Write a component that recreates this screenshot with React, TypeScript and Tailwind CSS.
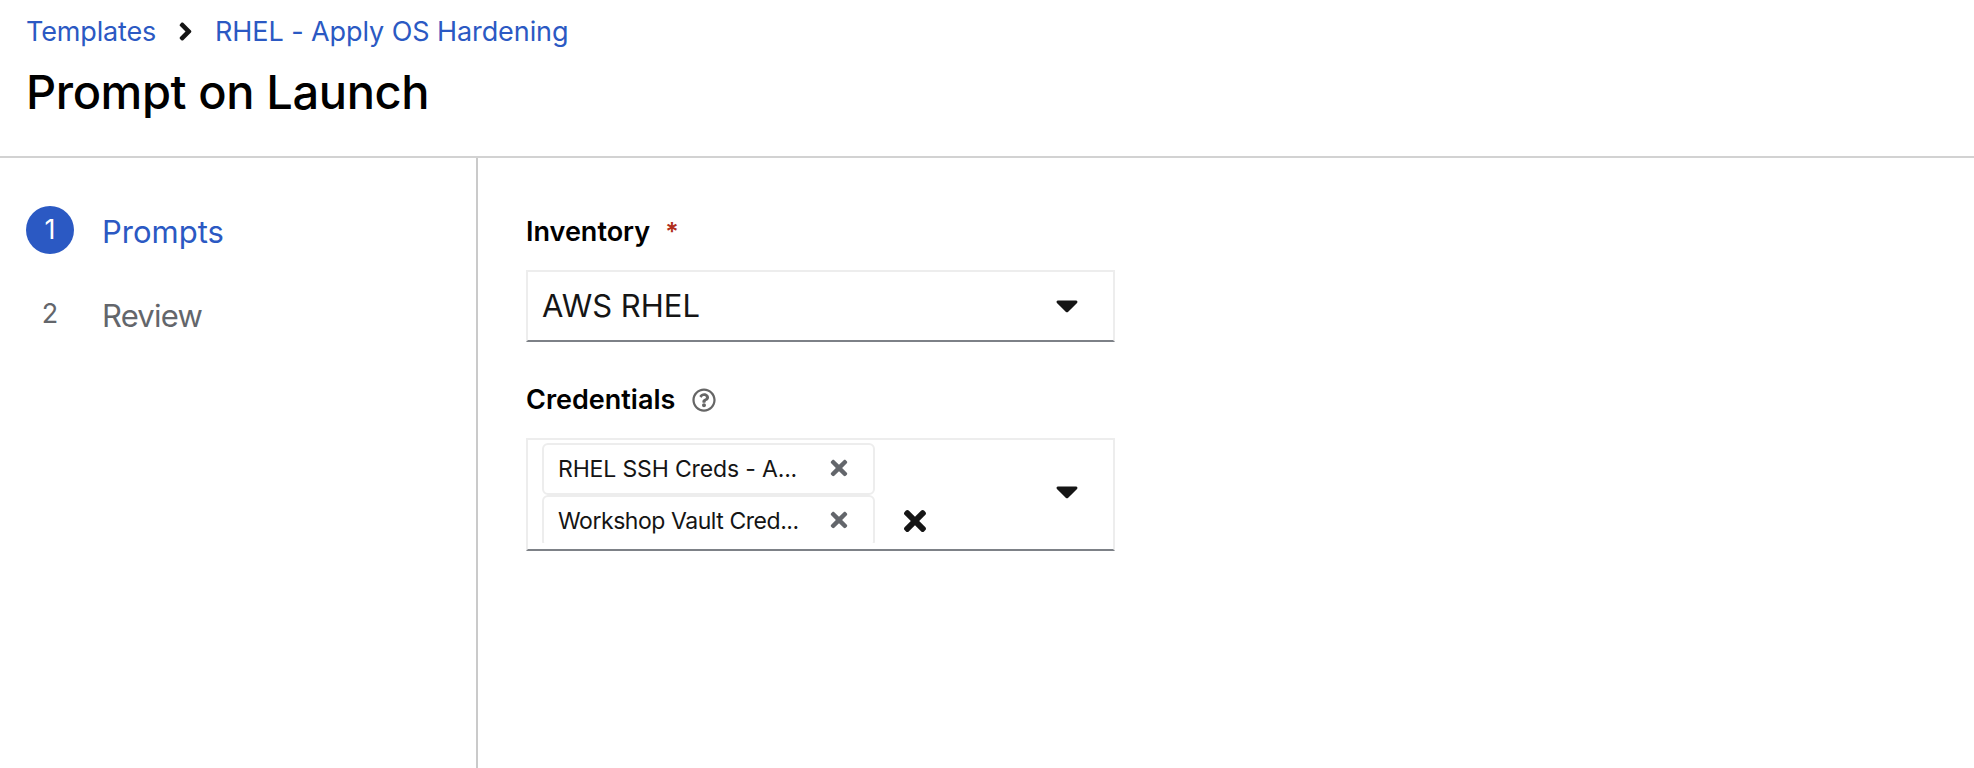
import type { ReactNode } from 'react';
import { FaAngleRight, FaCaretDown, FaRegQuestionCircle, FaTimes } from 'react-icons/fa';

function Header() {
  return (
    <header className="h-[158px] shrink-0 border-b-2 border-[#d2d2d2] pt-[11px] pl-[26px]">
      <nav className="flex h-[42px] items-center text-[27px] leading-[42px] text-[#2b59c3]">
        <a className="w-[145px] tracking-[-0.15px]">Templates</a>
        <FaAngleRight className="mr-[15px] mb-[2px] size-[29px] text-[#151515]" />
        <a className="tracking-[-0.08px]">RHEL - Apply OS Hardening</a>
      </nav>
      <h1 className="mt-2 text-[47px] leading-[62px] font-medium tracking-[-0.4px] text-black">
        Prompt on Launch
      </h1>
    </header>
  );
}

function Steps() {
  return (
    <ol className="flex w-[478px] shrink-0 flex-col gap-9 border-r-2 border-[#cacaca] pt-12 pl-[26px]">
      <li className="flex h-12 items-center gap-7 text-[#2b59c3]">
        <span className="flex size-12 items-center justify-center rounded-full bg-[#2b59c3] pt-px text-[27px] text-white">1</span>
        <span className="pt-[5px] text-[31px]">Prompts</span>
      </li>
      <li className="flex h-12 items-center gap-7 text-[#63666b]">
        <span className="flex size-12 items-center justify-center pt-px text-[27px]">2</span>
        <span className="pt-[5px] text-[31px] tracking-[-0.8px]">Review</span>
      </li>
    </ol>
  );
}

function Chip({ className, children }: { className: string; children: ReactNode }) {
  return (
    <div className="flex h-[52px] w-[333px] shrink-0 items-center justify-between rounded-md border-2 border-[#ededed] pr-[22px] pl-[14px] text-[23px] leading-[34px] text-[#151515]">
      <span className={className}>{children}</span>
      <FaTimes className="mb-[2px] size-6 text-[#63666b]" />
    </div>
  );
}

export default function App() {
  return (
    <div className="flex h-[768px] w-full flex-col overflow-hidden bg-white font-['Inter',sans-serif]">
      <Header />
      <div className="flex min-h-0 grow">
        <Steps />
        <main className="pt-[53px] pl-12">
          <div className="flex h-[42px] items-center text-[27px] font-semibold text-black">
            Inventory
            <span className="ml-[15px] text-[25px] leading-[34px] font-semibold text-[#b1301c]">*</span>
          </div>
          <div className="mt-[17px] flex h-[72px] w-[589px] items-center justify-between border-2 border-[#ededed] border-b-[#7d8187] pr-[28px] pl-[14px] text-[31px] text-[#151515]">
            AWS RHEL
            <FaCaretDown className="mb-[2px] size-9" />
          </div>
          <div className="mt-[37px] flex h-[42px] items-center gap-[17px] text-[27px] font-semibold text-black">
            Credentials
            <FaRegQuestionCircle className="size-6 text-[#666666]" />
          </div>
          <div className="mt-[17px] flex h-[113px] w-[589px] items-center border-2 border-[#ededed] border-b-[#7d8187] pr-[28px] pl-[14px] text-[#151515]">
            <div className="mt-[3px] flex h-[100px] flex-col self-start overflow-hidden">
              <Chip className="tracking-[-0.15px]">RHEL SSH Creds - A...</Chip>
              <Chip className="tracking-[-0.45px]">Workshop Vault Cred...</Chip>
            </div>
            <FaTimes className="mt-[53px] ml-[24px] size-8" />
            <FaCaretDown className="mb-[7px] ml-auto size-9" />
          </div>
        </main>
      </div>
    </div>
  );
}
